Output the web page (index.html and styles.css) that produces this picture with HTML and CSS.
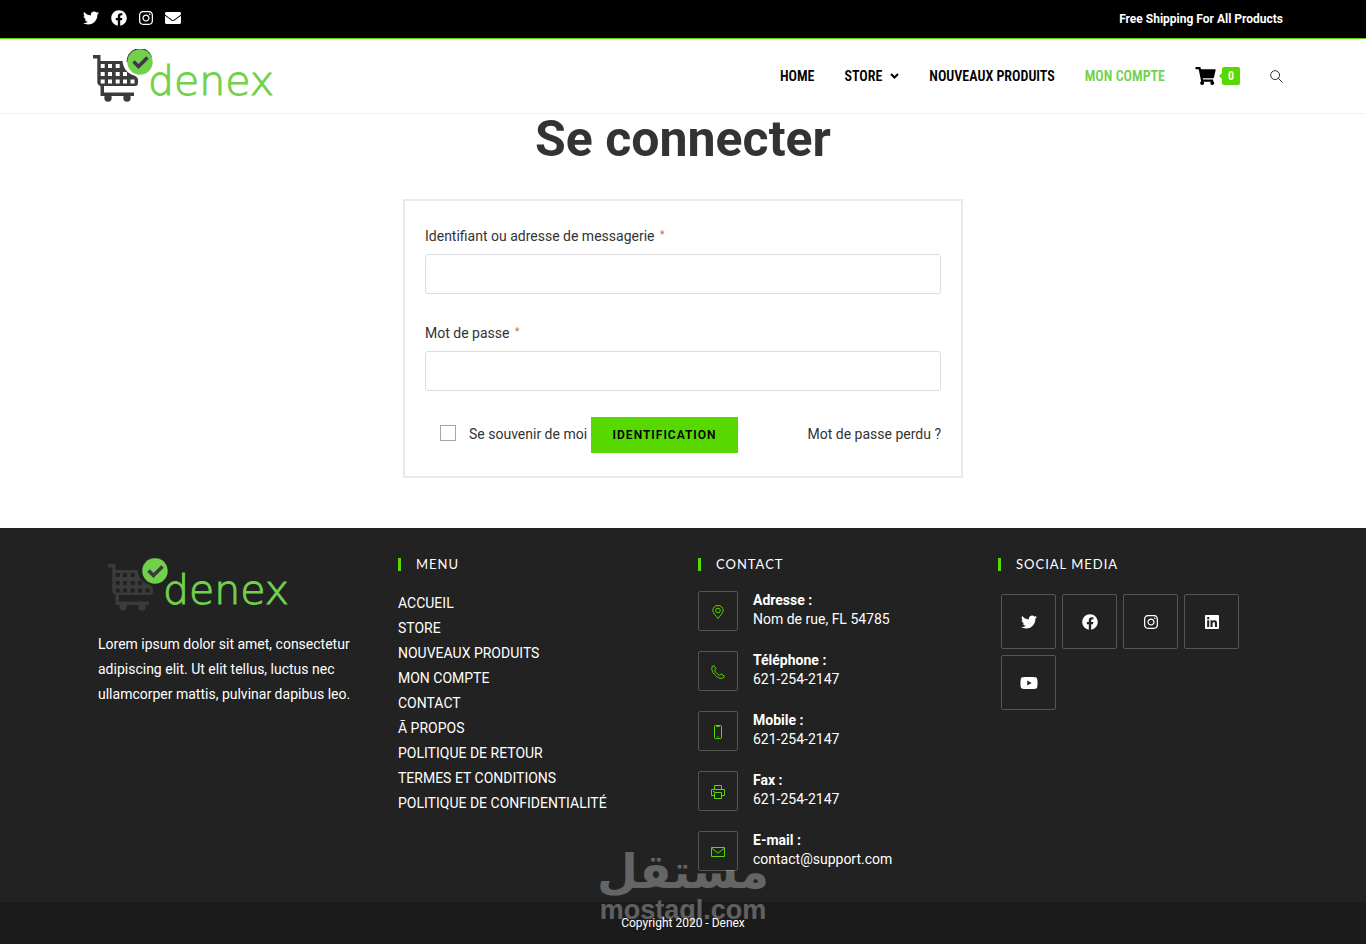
FILE: index.html
```html
<!DOCTYPE html>
<html lang="fr">
<head>
<meta charset="utf-8">
<meta name="viewport" content="width=device-width, initial-scale=1">
<title>Mon compte - Denex</title>
<link rel="stylesheet" href="styles.css">
</head>
<body>
<svg class="sprite" aria-hidden="true">
  <symbol id="twitter" viewBox="0 0 512 512"><path d="M459.37 151.716c.325 4.548.325 9.097.325 13.645 0 138.72-105.583 298.558-298.558 298.558-59.452 0-114.68-17.219-161.137-47.106 8.447.974 16.568 1.299 25.34 1.299 49.055 0 94.213-16.568 130.274-44.832-46.132-.975-84.792-31.188-98.112-72.772 6.498.974 12.995 1.624 19.818 1.624 9.421 0 18.843-1.3 27.614-3.573-48.081-9.747-84.143-51.98-84.143-102.985v-1.299c13.969 7.797 30.214 12.67 47.431 13.319-28.264-18.843-46.781-51.005-46.781-87.391 0-19.492 5.197-37.36 14.294-52.954 51.655 63.675 129.3 105.258 216.365 109.807-1.624-7.797-2.599-15.918-2.599-24.04 0-57.828 46.782-104.934 104.934-104.934 30.213 0 57.502 12.67 76.67 33.137 23.715-4.548 46.456-13.32 66.599-25.34-7.798 24.366-24.366 44.833-46.132 57.827 21.117-2.273 41.584-8.122 60.426-16.243-14.292 20.791-32.161 39.308-52.628 54.253z"/></symbol>
  <symbol id="facebook" viewBox="0 0 512 512"><path d="M504 256C504 119 393 8 256 8S8 119 8 256c0 123.78 90.69 226.38 209.25 245V327.69h-63V256h63v-54.64c0-62.15 37-96.48 93.67-96.48 27.14 0 55.52 4.84 55.52 4.84v61h-31.28c-30.8 0-40.41 19.12-40.41 38.73V256h68.78l-11 71.69h-57.78V501C413.31 482.38 504 379.78 504 256z"/></symbol>
  <symbol id="instagram" viewBox="0 0 448 512"><path d="M224.1 141c-63.6 0-114.9 51.3-114.9 114.9s51.3 114.9 114.9 114.9S339 319.5 339 255.9 287.7 141 224.1 141zm0 189.6c-41.1 0-74.7-33.5-74.7-74.7s33.5-74.7 74.7-74.7 74.7 33.5 74.7 74.7-33.6 74.7-74.7 74.7zm146.4-194.3c0 14.9-12 26.8-26.8 26.8-14.9 0-26.8-12-26.8-26.8s12-26.8 26.8-26.8 26.8 12 26.8 26.8zm76.1 27.2c-1.7-35.9-9.9-67.7-36.2-93.9-26.2-26.2-58-34.4-93.9-36.2-37-2.1-147.9-2.1-184.9 0-35.8 1.7-67.6 9.9-93.9 36.1s-34.4 58-36.2 93.9c-2.1 37-2.1 147.9 0 184.9 1.7 35.9 9.9 67.7 36.2 93.9s58 34.4 93.9 36.2c37 2.1 147.9 2.1 184.9 0 35.9-1.7 67.7-9.9 93.9-36.2 26.2-26.2 34.4-58 36.2-93.9 2.1-37 2.1-147.8 0-184.8zM398.8 388c-7.8 19.6-22.9 34.7-42.6 42.6-29.5 11.7-99.5 9-132.1 9s-102.7 2.6-132.1-9c-19.6-7.8-34.7-22.9-42.6-42.6-11.7-29.5-9-99.5-9-132.1s-2.6-102.7 9-132.1c7.8-19.6 22.9-34.7 42.6-42.6 29.5-11.7 99.5-9 132.1-9s102.7-2.6 132.1 9c19.6 7.8 34.7 22.9 42.6 42.6 11.7 29.5 9 99.5 9 132.1s2.7 102.7-9 132.1z"/></symbol>
  <symbol id="envelope" viewBox="0 0 512 512"><path d="M502.3 190.8c3.9-3.1 9.7-.2 9.7 4.7V400c0 26.5-21.5 48-48 48H48c-26.5 0-48-21.5-48-48V195.600c0-5 5.700-7.800 9.700-4.700 22.400 17.400 52.100 39.500 154.100 113.600 21.100 15.400 56.700 47.800 92.200 47.600 35.700.3 72-32.800 92.300-47.600 102-74.100 131.600-96.300 154-113.700zM256 320c23.200.4 56.600-29.200 73.400-41.400 132.700-96.300 142.800-104.700 173.400-128.700 5.800-4.500 9.200-11.500 9.200-18.900v-19c0-26.500-21.500-48-48-48H48c-26.500 0-48 21.500-48 48v19c0 7.400 3.400 14.300 9.200 18.900 30.600 23.900 40.700 32.400 173.400 128.700 16.800 12.200 50.200 41.800 73.400 41.400z"/></symbol>
  <symbol id="linkedin" viewBox="0 0 448 512"><path d="M416 32H31.900C14.300 32 0 46.500 0 64.300v383.400C0 465.500 14.300 480 31.900 480H416c17.600 0 32-14.500 32-32.300V64.300c0-17.800-14.400-32.300-32-32.300zM135.400 416H69V202.200h66.500V416zm-33.200-243c-21.300 0-38.500-17.300-38.500-38.500S80.900 96 102.200 96c21.200 0 38.500 17.300 38.500 38.500 0 21.300-17.200 38.500-38.500 38.500zm282.100 243h-66.400V312c0-24.800-.5-56.700-34.500-56.700-34.600 0-39.900 27-39.900 54.900V416h-66.400V202.200h63.700v29.200h.9c8.900-16.800 30.600-34.500 62.900-34.500 67.200 0 79.700 44.300 79.700 101.900V416z"/></symbol>
  <symbol id="youtube" viewBox="0 0 576 512"><path d="M549.655 124.083c-6.281-23.650-24.787-42.276-48.284-48.597C458.781 64 288 64 288 64S117.220 64 74.629 75.486c-23.497 6.322-42.003 24.947-48.284 48.597-11.412 42.867-11.412 132.305-11.412 132.305s0 89.438 11.412 132.305c6.281 23.650 24.787 41.500 48.284 47.821C117.220 448 288 448 288 448s170.780 0 213.371-11.486c23.497-6.321 42.003-24.171 48.284-47.821 11.412-42.867 11.412-132.305 11.412-132.305s0-89.438-11.412-132.305zm-317.510 213.508V175.185l142.739 81.205-142.739 81.201z"/></symbol>
  <symbol id="cart" viewBox="0 0 576 512"><path d="M528.12 301.319l47.273-208C578.806 78.301 567.391 64 551.990 64H159.208l-9.166-44.810C147.758 8.021 137.930 0 126.529 0H24C10.745 0 0 10.745 0 24v16c0 13.255 10.745 24 24 24h69.883l70.248 343.435C147.325 417.100 136 435.222 136 456c0 30.928 25.072 56 56 56s56-25.072 56-56c0-15.674-6.447-29.835-16.824-40h209.647C430.447 426.165 424 440.326 424 456c0 30.928 25.072 56 56 56s56-25.072 56-56c0-22.172-12.888-41.332-31.579-50.405l5.517-24.276c3.413-15.018-8.002-29.319-23.403-29.319H218.117l-6.545-32h293.145c11.206 0 20.920-7.754 23.403-18.681z"/></symbol>
  <symbol id="logo-mark" viewBox="0 0 200 60">
    <g fill="#3b3b3b">
      <path fill-rule="evenodd" d="M10 10H17.500V16H39.500C40 23 44 28 51 30.500Q55 32 55 35V38Q55 41 52 41H21V47.500H51V51H17.500V41Q14.500 40 14.300 37V13.500H10ZM17.700 19v4h4v-4ZM25 19v4h4v-4ZM32.700 19v4h4v-4ZM17.700 27v4h4v-4ZM25 27v4h4v-4ZM32.700 27v4h4v-4ZM40 27v4h4v-4ZM17.700 34.500v4h4v-4ZM25 34.500v4h4v-4ZM32.700 34.500v4h4v-4ZM40 34.500v4h4v-4ZM47.500 34.500v4h4v-4Z"/>
      <circle cx="25" cy="53" r="3.700"/><circle cx="44" cy="53" r="3.700"/>
      <path d="M43.500 17A13.500 13.500 0 0 1 52 4H62A13.500 13.500 0 0 1 69 12Z"/>
    </g>
    <circle cx="57" cy="17" r="12.700" fill="#71d14b"/>
    <path d="M50.500 16.500L55.500 21.500L64.500 12.500" fill="none" stroke="#3b3b3b" stroke-width="3.600"/>
  </symbol>
</svg>

<div class="topbar">
  <div class="container topbar-row">
    <div class="topbar-social">
      <a href="#" aria-label="Twitter"><svg class="icon"><use href="#twitter"/></svg></a>
      <a href="#" aria-label="Facebook"><svg class="icon"><use href="#facebook"/></svg></a>
      <a href="#" aria-label="Instagram"><svg class="icon icon-narrow"><use href="#instagram"/></svg></a>
      <a href="#" aria-label="E-mail"><svg class="icon"><use href="#envelope"/></svg></a>
    </div>
    <strong class="topbar-note">Free Shipping For All Products</strong>
  </div>
</div>

<header class="header">
  <div class="container header-row">
    <a href="#" class="logo-link" aria-label="Denex"><svg class="logo" viewBox="0 0 200 60"><use href="#logo-mark"/><text class="logo-text" x="65" y="50">denex</text></svg></a>
    <nav class="nav">
      <a href="#">HOME</a>
      <a href="#" class="nav-store">STORE <svg class="chevron" viewBox="0 0 9 6"><path d="M1 1L4.500 4.500L8 1"/></svg></a>
      <a href="#">NOUVEAUX PRODUITS</a>
      <a href="#" class="active">MON COMPTE</a>
      <a href="#" class="nav-cart" aria-label="Panier"><svg class="cart-icon"><use href="#cart"/></svg><span class="badge">0</span></a>
      <a href="#" aria-label="Rechercher"><svg class="search" viewBox="0 0 14 14"><circle cx="5.500" cy="5.500" r="4.800"/><path d="M9 9L13.500 13.500"/></svg></a>
    </nav>
  </div>
</header>

<main class="main">
  <h1 class="title">Se connecter</h1>
  <form class="login">
    <label class="label" for="user">Identifiant ou adresse de messagerie <span class="required">*</span></label>
    <input class="field" id="user" type="text">
    <label class="label" for="pass">Mot de passe <span class="required">*</span></label>
    <input class="field" id="pass" type="password">
    <div class="actions">
      <input class="check" id="remember" type="checkbox">
      <label class="remember" for="remember">Se souvenir de moi</label>
      <button class="submit" type="button">IDENTIFICATION</button>
      <a href="#" class="lost">Mot de passe perdu ?</a>
    </div>
  </form>
</main>

<footer class="footer">
  <div class="container footer-grid">
    <section class="about">
      <svg class="logo" viewBox="0 0 200 60"><use href="#logo-mark"/><text class="logo-text" x="65" y="50">denex</text></svg>
      <p>Lorem ipsum dolor sit amet, consectetur adipiscing elit. Ut elit tellus, luctus nec ullamcorper mattis, pulvinar dapibus leo.</p>
    </section>
    <section class="column">
      <h2 class="heading">MENU</h2>
      <ul class="menu">
        <li><a href="#">ACCUEIL</a></li>
        <li><a href="#">STORE</a></li>
        <li><a href="#">NOUVEAUX PRODUITS</a></li>
        <li><a href="#">MON COMPTE</a></li>
        <li><a href="#">CONTACT</a></li>
        <li><a href="#">Ã PROPOS</a></li>
        <li><a href="#">POLITIQUE DE RETOUR</a></li>
        <li><a href="#">TERMES ET CONDITIONS</a></li>
        <li><a href="#">POLITIQUE DE CONFIDENTIALITÉ</a></li>
      </ul>
    </section>
    <section class="column">
      <h2 class="heading">CONTACT</h2>
      <ul class="contact">
        <li><span class="contact-icon"><svg viewBox="0 0 14 14"><path d="M7 13.500C5 10.500 1.800 8 1.800 5.500a5.200 5 0 0 1 10.400 0C12.200 8 9 10.500 7 13.500Z"/><circle cx="7" cy="5.500" r="2.300"/></svg></span><div><strong>Adresse :</strong><br>Nom de rue, FL 54785</div></li>
        <li><span class="contact-icon"><svg viewBox="0 0 14 14"><path d="M1.200 1.500L3 .6L5 3.800L3.700 5.200C4.300 7.500 6.500 9.500 8.800 10.300L10.200 9L13.400 11L12.500 12.800C9.500 14.500 5.800 12.200 3.500 9.500C1.500 7.200 0 4 1.200 1.500Z"/></svg></span><div><strong>Téléphone :</strong><br>621-254-2147</div></li>
        <li><span class="contact-icon"><svg viewBox="0 0 14 14"><rect x="3.500" y=".5" width="7" height="13" rx="1"/><path d="M5.500 1.500h3M6.500 11.500h1"/></svg></span><div><strong>Mobile :</strong><br>621-254-2147</div></li>
        <li><span class="contact-icon"><svg viewBox="0 0 14 14"><path d="M3.500 4.500V.5h7v4M3.500 10.500h-3v-6h13v6h-3M3.500 7.500h7v6h-7ZM2 6.500h1.500"/></svg></span><div><strong>Fax :</strong><br>621-254-2147</div></li>
        <li><span class="contact-icon"><svg viewBox="0 0 14 14"><path d="M.5 2.500h13v9H.5ZM.5 3L7 8.200L13.500 3"/></svg></span><div><strong>E-mail :</strong><br>contact@support.com</div></li>
      </ul>
    </section>
    <section class="column">
      <h2 class="heading">SOCIAL MEDIA</h2>
      <div class="social">
        <a href="#" aria-label="Twitter"><svg class="icon"><use href="#twitter"/></svg></a>
        <a href="#" aria-label="Facebook"><svg class="icon"><use href="#facebook"/></svg></a>
        <a href="#" aria-label="Instagram"><svg class="icon"><use href="#instagram"/></svg></a>
        <a href="#" aria-label="LinkedIn"><svg class="icon"><use href="#linkedin"/></svg></a>
        <a href="#" aria-label="YouTube"><svg class="icon icon-wide"><use href="#youtube"/></svg></a>
      </div>
    </section>
  </div>
  <div class="copyright">
    <div class="watermark"><span class="watermark-ar" lang="ar">مستقل</span><span class="watermark-en">mostaql.com</span></div>
    <span class="copyright-text">Copyright 2020 - Denex</span>
  </div>
</footer>
</body>
</html>
```
FILE: styles.css
```css
* { box-sizing: border-box; }
body {
  margin: 0;
  min-height: 100vh;
  display: flex;
  flex-direction: column;
  background: #fff;
  color: #333;
  font: 14px/25px Roboto, sans-serif;
}
a { color: inherit; text-decoration: none; }
svg { display: block; }
ul { list-style: none; margin: 0; padding: 0; }
.sprite { position: absolute; width: 0; height: 0; }
.container { width: 100%; max-width: 1200px; margin: 0 auto; }
.icon { width: 16px; height: 16px; fill: currentColor; }
.icon-narrow { width: 14px; }
.icon-wide { width: 18px; }

.topbar { background: #000; color: #fff; border-bottom: 1px solid #5bd600; }
.topbar-row { display: flex; justify-content: space-between; align-items: center; height: 38px; }
.topbar-social { display: flex; gap: 12px; padding-bottom: 2px; }
.topbar-note { font-size: 12px; }

.header { border-bottom: 1px solid #f1f1f1; }
.header-row { display: flex; justify-content: space-between; align-items: center; height: 74px; }
.logo-link { padding-bottom: 2px; }
.logo { width: 200px; height: 60px; overflow: visible; }
.logo-text { font: 200 41px "DejaVu Sans", sans-serif; fill: #71d14b; stroke: #71d14b; stroke-width: 1px; }
.nav {
  display: flex;
  align-items: center;
  gap: 30px;
  color: #000;
  font: 600 14px/20px "Liberation Sans Narrow", "Roboto Condensed", Roboto, sans-serif;
}
.active { color: #71d14b; }
.nav-store, .nav-cart { display: flex; align-items: center; gap: 8px; }
.chevron { width: 9px; height: 6px; fill: none; stroke: #000; stroke-width: 2px; }
.nav-cart { gap: 6px; }
.cart-icon { width: 21px; height: 18px; }
.badge {
  position: relative;
  width: 18px;
  height: 18px;
  border-radius: 2px;
  background: #56d800;
  color: #fff;
  font-size: 12px;
  line-height: 18px;
  text-align: center;
}
.badge::before {
  content: "";
  position: absolute;
  left: -3px;
  top: 6px;
  border: 3px solid transparent;
  border-left: 0;
  border-right-color: #56d800;
}
.search { width: 13px; height: 13px; fill: none; stroke: #222; stroke-width: 1px; }

.main { flex: 1; padding-bottom: 50px; }
.title { margin: 0 0 35px; font-size: 50px; line-height: 50px; text-align: center; }
.login { max-width: 560px; margin: 0 auto; padding: 22px 20px 23px; border: 2px solid #e9e9e9; }
.label { display: block; margin-bottom: 5px; line-height: 26px; }
.required { margin-left: 2px; color: #c76b1c; font-size: 10px; vertical-align: 3px; line-height: 1; }
.field { display: block; width: 100%; height: 40px; margin-bottom: 26px; padding: 6px 12px; border: 1px solid #ddd; border-radius: 3px; background: #fff; font: inherit; }
.actions { display: flex; align-items: center; padding-left: 15px; }
.check { appearance: none; width: 16px; height: 16px; margin: 0 13px 4px 0; border: 1px solid #a6a6a6; background: #fff; }
.remember, .lost { padding-bottom: 2px; }
.submit { min-width: 147px; height: 36px; margin-left: 4px; padding: 0 20px; border: 0; background: #56d800; color: #000; font: 600 12px/36px Roboto, sans-serif; letter-spacing: 1px; }
.lost { margin-left: auto; }

.footer { background: #222; color: #fff; }
.footer-grid { display: grid; grid-template-columns: repeat(4, minmax(0, 1fr)); padding: 26px 0 31px; }
.about { padding: 0 15px; }
.about p { margin: 18px 0 0; }
.column { padding: 4px 15px 0; }
.heading { margin: 0 0 20px; padding-left: 15px; border-left: 3px solid #56d800; font: 400 13px/13px Lato, sans-serif; letter-spacing: 1px; }
.contact { display: grid; gap: 20px; line-height: 19px; }
.contact li { display: flex; gap: 15px; height: 40px; }
.contact-icon { display: grid; place-items: center; width: 40px; height: 40px; border: 1px solid #555; border-radius: 2px; }
.contact-icon svg { width: 14px; height: 14px; margin-top: 2px; fill: none; stroke: #56d800; stroke-width: 1px; }
.social { display: flex; flex-wrap: wrap; gap: 6px; padding: 3px; }
.social a { display: grid; place-items: center; width: 55px; height: 55px; border: 1px solid #555; border-radius: 2px; }
.copyright { position: relative; height: 42px; background: #1b1b1b; font-size: 12px; line-height: 42px; text-align: center; }
.copyright-text { position: relative; }
.watermark { position: absolute; left: 0; right: 0; bottom: 19px; display: flex; flex-direction: column; align-items: center; color: #fff; opacity: .3; }
.watermark-ar { font: bold 47px/46px "DejaVu Sans", sans-serif; }
.watermark-en { font: bold 27px/30px "Liberation Sans", sans-serif; }
```
